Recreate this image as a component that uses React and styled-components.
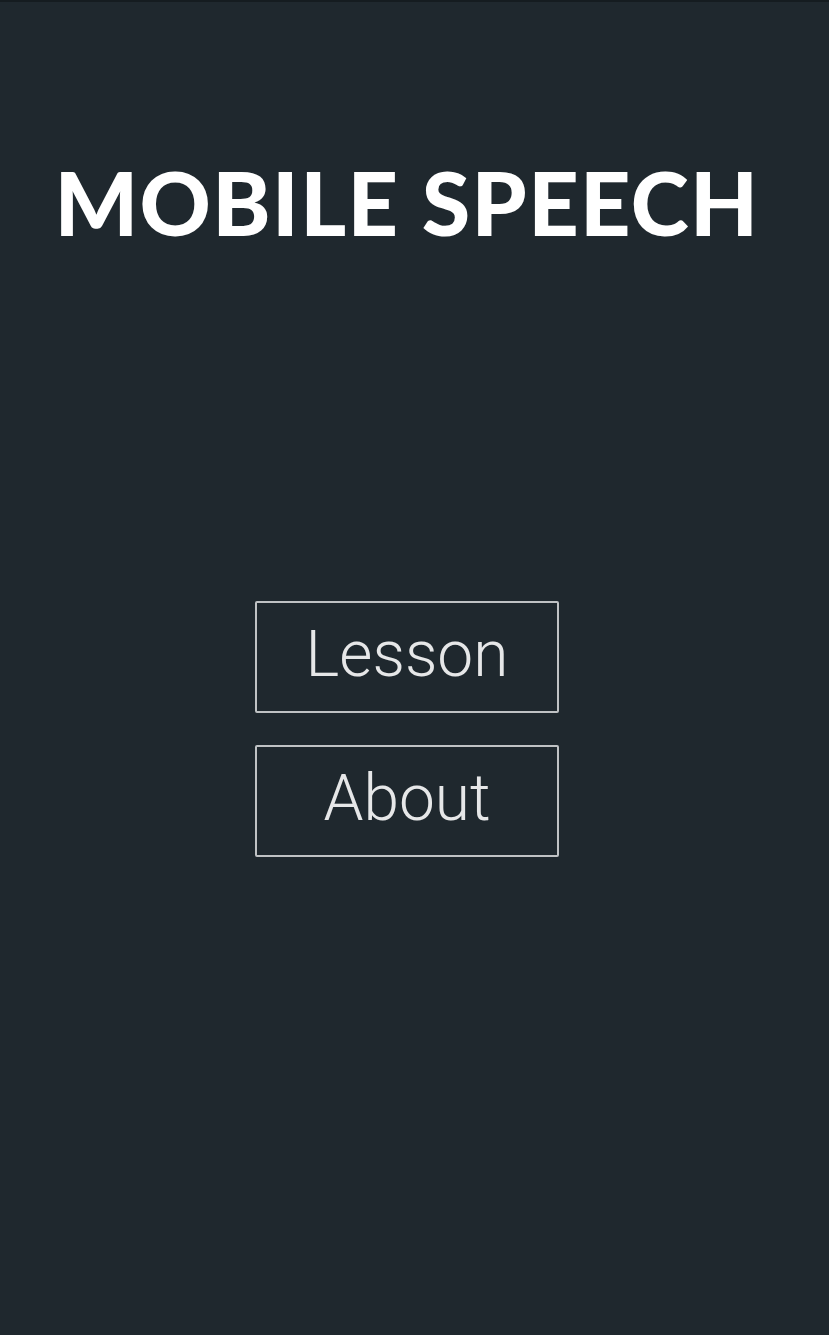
import React from 'react'
import styled, { createGlobalStyle } from 'styled-components'

const GlobalStyle = createGlobalStyle`
  html, body {
    margin: 0;
    padding: 0;
    background: #1f282e;
  }
`

const Screen = styled.main`
  display: flex;
  flex-direction: column;
  align-items: center;
  box-sizing: border-box;
  width: 100%;
  min-height: 1335px;
  padding-right: 15px;
  border-top: 2px solid #151c20;
  background: #1f282e;
`

const Title = styled.h1`
  margin: 152px 0 0;
  font-family: Lato, 'Liberation Sans', sans-serif;
  font-weight: 900;
  font-size: 88px;
  line-height: 1.1;
  letter-spacing: 1.4px;
  color: #ffffff;
  white-space: nowrap;
`

const Menu = styled.nav`
  display: flex;
  flex-direction: column;
  gap: 32px;
  margin-top: 350px;
`

const MenuButton = styled.a`
  display: flex;
  align-items: center;
  justify-content: center;
  box-sizing: border-box;
  width: 304px;
  height: 112px;
  padding-bottom: 4px;
  border: 2px solid #bfc2c4;
  border-radius: 2px;
  font-family: Roboto, 'Liberation Sans', sans-serif;
  font-weight: 300;
  font-size: 64px;
  color: #e6e7e8;
  text-decoration: none;
`

export default function App() {
  return (
    <>
      <GlobalStyle />
      <Screen>
        <Title>MOBILE SPEECH</Title>
        <Menu>
          <MenuButton href="#lesson">Lesson</MenuButton>
          <MenuButton href="#about">About</MenuButton>
        </Menu>
      </Screen>
    </>
  )
}
